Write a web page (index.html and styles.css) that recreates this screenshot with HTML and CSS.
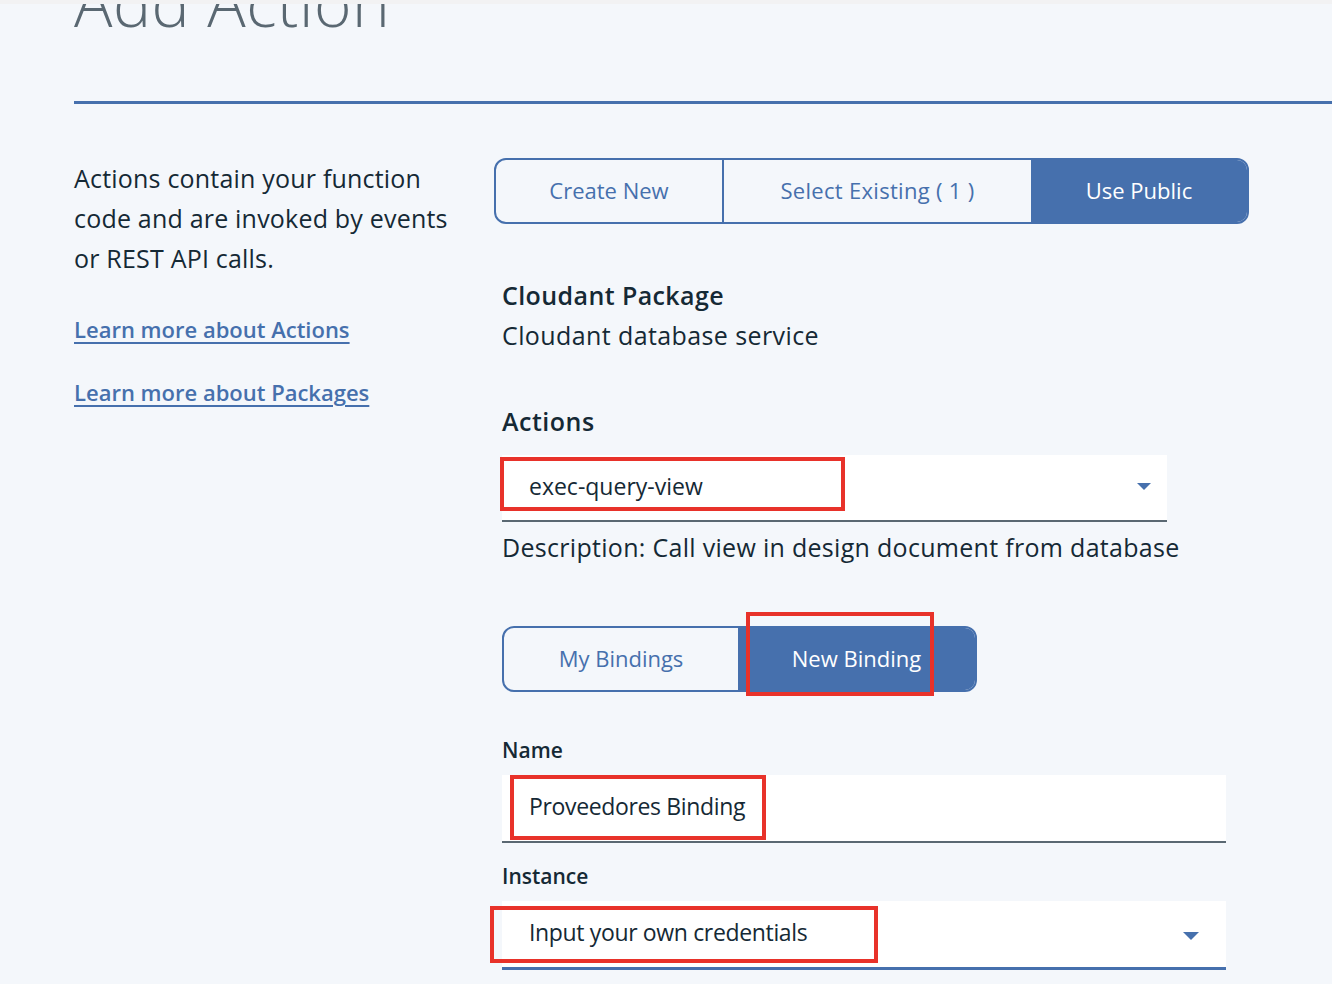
FILE: index.html
```html
<!DOCTYPE html>
<html lang="en">
<head>
<meta charset="utf-8">
<title>Add Action</title>
<link rel="stylesheet" href="styles.css">
</head>
<body>
<div class="topstrip"></div>
<header class="page-header">
  <h1 class="title">Add Action</h1>
</header>
<main class="layout">
  <aside class="intro">
    <p class="intro-text">Actions contain your function code and are invoked by events or REST API calls.</p>
    <a class="intro-link" href="#">Learn more about Actions</a>
    <a class="intro-link" href="#">Learn more about Packages</a>
  </aside>
  <section class="panel">
    <div class="tabs tabs-main">
      <button class="tab tab-create">Create New</button>
      <button class="tab tab-existing">Select Existing ( 1 )</button>
      <button class="tab tab-public is-active">Use Public</button>
    </div>
    <div class="content">
      <h2 class="pkg-name">Cloudant Package</h2>
      <p class="pkg-desc">Cloudant database service</p>

      <div class="label label-lg">Actions</div>
      <div class="select select-actions">
        <span class="field-text field-text-wide">exec-query-view</span>
        <svg class="caret" width="14" height="7" viewBox="0 0 14 7"><path d="M0 0h14L7 7z" fill="#4670ad"/></svg>
        <span class="mark mark-actions"></span>
      </div>
      <p class="desc">Description: Call view in design document from database</p>

      <div class="tabs tabs-binding">
        <button class="tab tab-mine">My Bindings</button>
        <button class="tab tab-new is-active">New Binding</button>
        <span class="mark mark-binding"></span>
      </div>

      <div class="label label-sm label-name">Name</div>
      <div class="input input-name">
        <span class="field-text">Proveedores Binding</span>
        <span class="mark mark-name"></span>
      </div>

      <div class="label label-sm label-instance">Instance</div>
      <div class="select select-instance">
        <span class="field-text">Input your own credentials</span>
        <svg class="caret caret-lg" width="16" height="8" viewBox="0 0 16 8"><path d="M0 0h16L8 8z" fill="#4670ad"/></svg>
        <span class="mark mark-instance"></span>
      </div>
    </div>
  </section>
</main>
</body>
</html>
```

FILE: styles.css
```css
* { box-sizing: border-box; }
html, body { margin: 0; padding: 0; }
body {
  background: #f4f7fb;
  font-family: "Open Sans", "Noto Sans", sans-serif;
  color: #152935;
  width: 1332px;
  height: 984px;
  overflow: hidden;
}
.topstrip { height: 4px; background: #f2f2f3; }

.page-header {
  margin-left: 74px;
  height: 100px;
  border-bottom: 3px solid #4670ad;
  position: relative;
  overflow: hidden;
}
.title {
  margin: -36px 0 0 0;
  font-size: 64px;
  font-weight: 300;
  line-height: 70px;
  color: #5a6872;
  letter-spacing: 0.5px;
}

.layout {
  display: flex;
  padding: 54px 0 0 74px;
}
.intro { width: 420px; display: flex; flex-direction: column; align-items: flex-start; }
.intro-text {
  margin: 0;
  width: 390px;
  font-size: 25px;
  letter-spacing: 0.2px;
  line-height: 40px;
  color: #152935;
}
.intro-link {
  font-size: 22px;
  font-weight: 600;
  color: #4670ad;
  text-decoration: underline;
  text-underline-offset: 4px;
  line-height: 32px;
}
.intro-link:first-of-type { margin-top: 35px; }
.intro-link + .intro-link { margin-top: 31px; }

.panel { width: 760px; }
.tabs {
  display: flex;
  border: 2px solid #4670ad;
  border-radius: 12px;
  position: relative;
}
.tab {
  font-family: inherit;
  font-size: 22px;
  color: #4670ad;
  background: transparent;
  border: 0;
  padding: 0 0 3px 0;
  display: flex;
  align-items: center;
  justify-content: center;
}
.tab.is-active { background: #4670ad; color: #ffffff; }
.tabs-main { width: 755px; height: 66px; }
.tab-create { width: 228px; border-right: 2px solid #4670ad; border-radius: 10px 0 0 10px; }
.tab-existing { width: 307px; letter-spacing: 0.3px; }
.tab-public { flex: 1; border-radius: 0 10px 10px 0; }

.content { padding-left: 8px; }
.pkg-name {
  margin: 51px 0 0;
  font-size: 25px;
  letter-spacing: 0.4px;
  font-weight: 600;
  line-height: 40px;
}
.pkg-desc {
  margin: 0;
  font-size: 25px;
  letter-spacing: 0.4px;
  line-height: 40px;
}
.label { font-weight: 600; }
.label-lg { margin-top: 46px; font-size: 25px; letter-spacing: 0.5px; line-height: 40px; }
.label-sm { font-size: 21px; line-height: 30px; }

.select, .input {
  position: relative;
  display: flex;
  align-items: center;
  background: #ffffff;
  padding: 0 0 4px 27px;
}
.field-text { font-size: 23px; letter-spacing: -0.35px; color: #152935; }
.field-text-wide { letter-spacing: 0; }
.select-actions {
  margin-top: 14px;
  width: 665px;
  height: 67px;
  border-bottom: 2px solid #5a6872;
}
.caret { position: absolute; right: 16px; top: 28px; }
.caret-lg { right: 27px; top: 31px; }
.desc { margin: 5px 0 0; font-size: 25px; letter-spacing: 0.3px; line-height: 40px; }

.tabs-binding { margin-top: 59px; width: 475px; height: 66px; }
.tab-mine { width: 234px; border-radius: 10px 0 0 10px; }
.tab-new { flex: 1; border-radius: 0 10px 10px 0; }

.label-name { margin-top: 43px; }
.input-name {
  margin-top: 10px;
  width: 724px;
  height: 68px;
  border-bottom: 2px solid #5a6872;
}
.label-instance { margin-top: 18px; }
.select-instance {
  margin-top: 10px;
  width: 724px;
  height: 69px;
  border-bottom: 3px solid #4670ad;
}

.mark {
  position: absolute;
  border: 4px solid #e8322a;
  pointer-events: none;
}
.mark-actions { left: -2px; top: 2px; width: 345px; height: 54px; }
.mark-binding { left: 242px; top: -16px; width: 188px; height: 84px; }
.mark-name { left: 8px; top: 0; width: 256px; height: 65px; }
.mark-instance { left: -12px; top: 5px; width: 388px; height: 57px; }
```
